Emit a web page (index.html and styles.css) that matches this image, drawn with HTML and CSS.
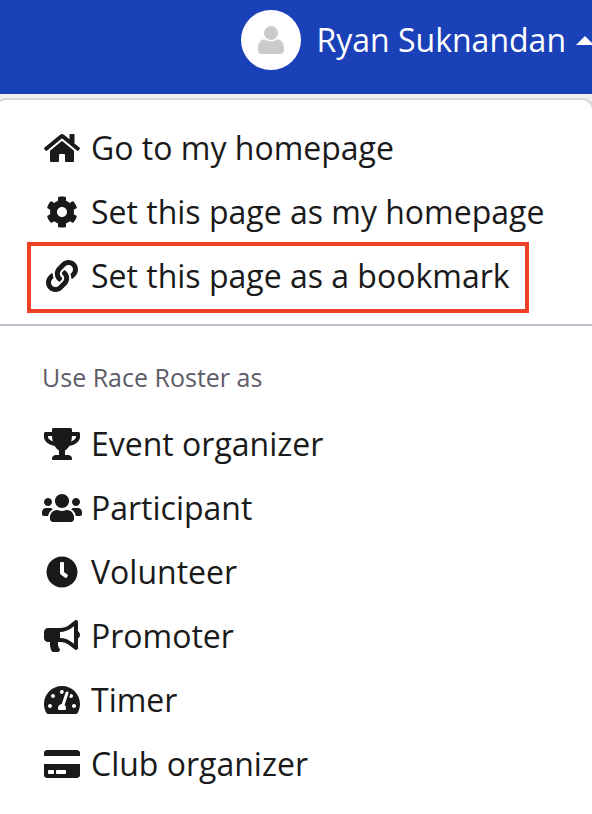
FILE: index.html
```html
<!DOCTYPE html>
<html lang="en">
<head>
<meta charset="utf-8">
<meta name="viewport" content="width=device-width, initial-scale=1">
<title>Race Roster</title>
<link rel="stylesheet" href="styles.css">
</head>
<body>
<header class="topbar">
  <button class="account" type="button" aria-expanded="true" aria-controls="account-menu">
    <span class="avatar">
      <svg class="avatar-icon" viewBox="0 0 26 28" aria-hidden="true"><circle cx="13" cy="7" r="7"/><path d="M6.500 13.300c3.600 2.700 9.400 2.700 13 0 4 .2 6.500 4 6.500 9.200V24c0 2.500-1.500 4-4 4H4c-2.500 0-4-1.500-4-4v-1.500c0-5.200 2.500-9 6.500-9.200z"/></svg>
    </span>
    <span class="account-name">Ryan Suknandan</span>
    <span class="caret"></span>
  </button>
</header>
<main class="page">
  <nav class="menu" id="account-menu" aria-label="Account">
    <ul class="menu-list">
      <li><a class="item" href="#home"><svg class="icon" viewBox="-32 0 640 512" aria-hidden="true"><path d="M280.37 148.26L96 300.11V464a16 16 0 0 0 16 16l112.06-.29a16 16 0 0 0 15.92-16V368a16 16 0 0 1 16-16h64a16 16 0 0 1 16 16v95.64a16 16 0 0 0 16 16.05L464 480a16 16 0 0 0 16-16V300L295.67 148.26a12.19 12.19 0 0 0-15.3 0zM571.6 251.47L488 182.56V44.05a12 12 0 0 0-12-12h-56a12 12 0 0 0-12 12v72.61L318.47 43a48 48 0 0 0-61 0L4.34 251.47a12 12 0 0 0-1.6 16.9l25.5 31A12 12 0 0 0 45.15 301l235.22-193.74a12.19 12.19 0 0 1 15.3 0L530.9 301a12 12 0 0 0 16.9-1.6l25.5-31a12 12 0 0 0-1.7-16.93z"/></svg>Go to my homepage</a></li>
      <li><a class="item" href="#set-home"><svg class="icon" viewBox="-64 0 640 512" aria-hidden="true"><path d="M487.4 315.7l-42.6-24.6c4.3-23.2 4.3-47 0-70.2l42.6-24.6c4.9-2.8 7.1-8.6 5.5-14-11.1-35.6-30-67.8-54.7-94.6-3.8-4.1-10-5.1-14.8-2.3L380.8 110c-17.9-15.4-38.5-27.3-60.8-35.1V25.8c0-5.6-3.9-10.5-9.4-11.7-36.7-8.2-74.3-7.8-109.2 0-5.5 1.2-9.4 6.1-9.4 11.7V75c-22.2 7.9-42.8 19.8-60.8 35.1L88.7 85.5c-4.9-2.8-11-1.9-14.8 2.3-24.7 26.7-43.6 58.9-54.7 94.6-1.7 5.4.6 11.2 5.5 14L67.3 221c-4.3 23.2-4.3 47 0 70.2l-42.6 24.6c-4.9 2.8-7.1 8.6-5.5 14 11.1 35.6 30 67.8 54.7 94.6 3.8 4.1 10 5.1 14.8 2.3l42.6-24.6c17.900 15.400 38.500 27.300 60.800 35.100v49.200c0 5.600 3.900 10.500 9.400 11.700 36.700 8.200 74.300 7.800 109.200 0 5.500-1.200 9.400-6.100 9.400-11.700v-49.200c22.200-7.900 42.800-19.800 60.800-35.100l42.600 24.600c4.900 2.800 11 1.900 14.800-2.300 24.700-26.700 43.600-58.900 54.700-94.600 1.500-5.500-.7-11.300-5.600-14.100zM256 336c-44.100 0-80-35.900-80-80s35.900-80 80-80 80 35.900 80 80-35.900 80-80 80z"/></svg>Set this page as my homepage</a></li>
      <li><a class="item item-highlighted" href="#bookmark"><svg class="icon" viewBox="-64 0 640 512" aria-hidden="true"><path d="M326.612 185.391c59.747 59.809 58.927 155.698.36 214.59-.11.12-.24.25-.36.37l-67.2 67.2c-59.27 59.27-155.699 59.262-214.96 0-59.27-59.26-59.27-155.7 0-214.96l37.106-37.106c9.84-9.84 26.786-3.3 27.294 10.606.648 17.722 3.826 35.527 9.69 52.721 1.986 5.822.567 12.262-3.783 16.612l-13.087 13.087c-28.026 28.026-28.905 73.66-1.155 101.96 28.024 28.579 74.086 28.749 102.325.51l67.2-67.19c28.191-28.191 28.073-73.757 0-101.83-3.701-3.694-7.429-6.564-10.341-8.569a16.037 16.037 0 0 1-6.947-12.606c-.396-10.567 3.348-21.456 11.698-29.806l21.054-21.055c5.521-5.521 14.182-6.199 20.584-1.731a152.482 152.482 0 0 1 20.522 17.197zM467.547 44.449c-59.261-59.262-155.69-59.27-214.96 0l-67.2 67.2c-.12.12-.25.25-.36.37-58.566 58.892-59.387 154.781.36 214.59a152.454 152.454 0 0 0 20.521 17.196c6.402 4.468 15.064 3.789 20.584-1.731l21.054-21.055c8.35-8.35 12.094-19.239 11.698-29.806a16.037 16.037 0 0 0-6.947-12.606c-2.912-2.005-6.64-4.875-10.341-8.569-28.073-28.073-28.191-73.639 0-101.83l67.2-67.19c28.239-28.239 74.3-28.069 102.325.51 27.75 28.3 26.872 73.934-1.155 101.96l-13.087 13.087c-4.35 4.35-5.769 10.79-3.783 16.612 5.864 17.194 9.042 34.999 9.69 52.721.509 13.906 17.454 20.446 27.294 10.606l37.106-37.106c59.271-59.259 59.271-155.699.001-214.959z"/></svg>Set this page as a bookmark</a></li>
    </ul>
    <section class="roles">
      <h2 class="roles-title">Use Race Roster as</h2>
      <ul class="role-list">
        <li><a class="item" href="#organizer"><svg class="icon" viewBox="-32 0 640 512" aria-hidden="true"><path d="M552 64H448V24c0-13.3-10.7-24-24-24H152c-13.3 0-24 10.7-24 24v40H24C10.7 64 0 74.7 0 88v56c0 35.7 22.5 72.4 61.9 100.7 31.5 22.7 69.8 37.1 110 41.7C203.3 338.5 240 360 240 360v72h-48c-35.3 0-64 20.7-64 56v12c0 6.6 5.4 12 12 12h296c6.6 0 12-5.4 12-12v-12c0-35.3-28.7-56-64-56h-48v-72s36.7-21.5 68.1-73.6c40.3-4.6 78.6-19 110-41.7 39.3-28.3 61.9-65 61.9-100.7V88c0-13.3-10.7-24-24-24zM99.3 192.8C74.9 175.2 64 155.6 64 144v-16h64.2c1 32.6 5.8 61.2 12.8 86.2-15.1-5.2-29.2-12.4-41.7-21.4zM512 144c0 16.1-17.7 36.1-35.3 48.8-12.5 9-26.7 16.2-41.8 21.4 7-25 11.8-53.6 12.8-86.2H512v16z"/></svg>Event organizer</a></li>
        <li><a class="item" href="#participant"><svg class="icon" viewBox="0 0 640 512" aria-hidden="true"><path d="M96 224c35.3 0 64-28.7 64-64s-28.7-64-64-64-64 28.7-64 64 28.7 64 64 64zm448 0c35.3 0 64-28.7 64-64s-28.7-64-64-64-64 28.7-64 64 28.7 64 64 64zm32 32h-64c-17.6 0-33.5 7.1-45.1 18.6 40.3 22.1 68.9 62 75.1 109.4h66c17.7 0 32-14.3 32-32v-32c0-35.3-28.7-64-64-64zm-256 0c61.9 0 112-50.1 112-112S381.9 32 320 32 208 82.1 208 144s50.1 112 112 112zm76.8 32h-8.3c-20.8 10-43.9 16-68.5 16s-47.6-6-68.5-16h-8.3C179.6 288 128 339.6 128 403.2V432c0 26.5 21.5 48 48 48h288c26.5 0 48-21.5 48-48v-28.8c0-63.6-51.6-115.2-115.2-115.2zm-223.7-13.4C161.5 263.1 145.6 256 128 256H64c-35.3 0-64 28.7-64 64v32c0 17.7 14.3 32 32 32h65.9c6.3-47.4 34.9-87.3 75.2-109.4z"/></svg>Participant</a></li>
        <li><a class="item" href="#volunteer"><svg class="icon" viewBox="-64 0 640 512" aria-hidden="true"><path d="M256,8C119,8,8,119,8,256S119,504,256,504,504,393,504,256,393,8,256,8Zm92.490,313h0l-20,25a16,16,0,0,1-22.490,2.500h0l-67-49.720a40,40,0,0,1-15-31.230V112a16,16,0,0,1,16-16h32a16,16,0,0,1,16,16V256l58,42.500A16,16,0,0,1,348.490,321Z"/></svg>Volunteer</a></li>
        <li><a class="item" href="#promoter"><svg class="icon" viewBox="-32 0 640 512" aria-hidden="true"><path d="M576 240c0-23.63-12.95-44.04-32-55.12V32.01C544 23.26 537.02 0 512 0c-7.12 0-14.19 2.38-19.98 7.02l-85.03 68.03C364.28 109.19 310.66 128 256 128H64c-35.35 0-64 28.65-64 64v96c0 35.35 28.65 64 64 64h33.7c-1.39 10.48-2.18 21.14-2.18 32 0 39.77 9.26 77.35 25.56 110.94 5.19 10.69 16.52 17.06 28.4 17.06h74.28c26.05 0 41.69-29.84 25.9-50.56-16.4-21.52-26.15-48.36-26.15-77.44 0-11.11 1.62-21.79 4.41-32H256c54.66 0 108.28 18.81 150.98 52.95l85.03 68.03a32.023 32.023 0 0 0 19.98 7.02c24.92 0 32-22.78 32-32V295.13C563.05 284.04 576 263.63 576 240zm-96 141.42l-33.05-26.44C392.95 311.78 325.12 288 256 288v-96c69.12 0 136.95-23.78 190.95-66.98L480 98.58v282.84z"/></svg>Promoter</a></li>
        <li><a class="item" href="#timer"><svg class="icon" viewBox="-32 0 640 512" aria-hidden="true"><path d="M288 32C128.94 32 0 160.94 0 320c0 52.8 14.25 102.26 39.06 144.8 5.61 9.62 16.3 15.2 27.44 15.2h443c11.14 0 21.83-5.58 27.44-15.2C561.75 422.26 576 372.8 576 320c0-159.06-128.94-288-288-288zm0 64c14.71 0 26.58 10.13 30.32 23.65-1.11 2.26-2.64 4.23-3.45 6.67l-9.22 27.67c-5.13 3.49-10.97 6.01-17.64 6.01-17.67 0-32-14.33-32-32S270.33 96 288 96zM96 384c-17.67 0-32-14.33-32-32s14.33-32 32-32 32 14.33 32 32-14.33 32-32 32zm48-160c-17.67 0-32-14.33-32-32s14.33-32 32-32 32 14.33 32 32-14.33 32-32 32zm246.77-72.41l-61.33 184C343.13 347.33 352 364.54 352 384c0 11.72-3.38 22.55-8.88 32H232.88c-5.5-9.45-8.88-20.28-8.88-32 0-33.94 26.5-61.43 59.9-63.59l61.34-184.01c4.17-12.56 17.73-19.45 30.36-15.17 12.57 4.19 19.35 17.79 15.17 30.36zm14.66 57.2l15.52-46.55c3.47-1.29 7.13-2.23 11.05-2.23 17.67 0 32 14.33 32 32s-14.33 32-32 32c-11.38-.01-20.89-6.28-26.57-15.22zM480 384c-17.67 0-32-14.33-32-32s14.33-32 32-32 32 14.33 32 32-14.33 32-32 32z"/></svg>Timer</a></li>
        <li><a class="item" href="#club"><svg class="icon" viewBox="-32 0 640 512" aria-hidden="true"><path d="M0 432c0 26.5 21.5 48 48 48h480c26.5 0 48-21.5 48-48V256H0v176zm192-68c0-6.6 5.4-12 12-12h136c6.6 0 12 5.4 12 12v40c0 6.6-5.4 12-12 12H204c-6.6 0-12-5.4-12-12v-40zm-128 0c0-6.6 5.4-12 12-12h72c6.6 0 12 5.4 12 12v40c0 6.6-5.4 12-12 12H76c-6.6 0-12-5.4-12-12v-40zM576 80v48H0V80c0-26.5 21.5-48 48-48h480c26.5 0 48 21.5 48 48z"/></svg>Club organizer</a></li>
      </ul>
    </section>
  </nav>
</main>
</body>
</html>
```
FILE: styles.css
```css
* {
  box-sizing: border-box;
}

body {
  display: flex;
  flex-direction: column;
  min-height: 100vh;
  margin: 0;
  overflow-x: hidden;
  background: #efeff2;
  color: #1a1a1a;
  font-family: "Open Sans", "Noto Sans", sans-serif;
  font-size: 32px;
  line-height: 44px;
}

ul {
  margin: 0;
  padding: 0;
  list-style: none;
}

.topbar {
  display: flex;
  justify-content: flex-end;
  padding: 10px 0 24px;
  overflow: hidden;
  background: #1a41b8;
}

.account {
  display: flex;
  align-items: center;
  margin: 0 -2px 0 0;
  padding: 0;
  border: 0;
  background: none;
  color: #fff;
  font: inherit;
  white-space: nowrap;
}

.avatar {
  display: flex;
  align-items: center;
  justify-content: center;
  width: 60px;
  height: 60px;
  margin-right: 16px;
  border-radius: 50%;
  background: #fff;
}

.avatar-icon {
  width: 26px;
  height: 28px;
  fill: #cbcbcb;
}

.caret {
  margin-left: 10px;
  border: solid transparent;
  border-width: 0 9px 9px;
  border-bottom-color: #fff;
}

.page {
  display: flex;
  flex: 1;
  flex-direction: column;
  padding-top: 4px;
  overflow: hidden;
}

.menu {
  flex: 1;
  margin: 0 -2px 0 -6px;
  border: 2px solid #d8d8d8;
  border-bottom: 0;
  border-radius: 12px 12px 0 0;
  background: #fff;
}

.menu-list {
  padding: 16px 38px 16px 46px;
  border-bottom: 2px solid #c0bfcb;
}

.item {
  display: flex;
  align-items: center;
  gap: 9px;
  width: fit-content;
  height: 64px;
  color: inherit;
  text-decoration: none;
  white-space: nowrap;
}

.icon {
  flex: none;
  width: 40px;
  height: 32px;
  fill: #1a1a1a;
}

.item-highlighted {
  position: relative;
}

.item-highlighted::after {
  position: absolute;
  inset: -2px -19px -5px -15px;
  border: 4px solid #ee4024;
  content: "";
}

.roles {
  padding: 33px 38px 16px 46px;
}

.roles-title {
  margin: 0 0 17px;
  color: #5e5d67;
  font-size: 25px;
  font-weight: 400;
  line-height: 36px;
}
```
